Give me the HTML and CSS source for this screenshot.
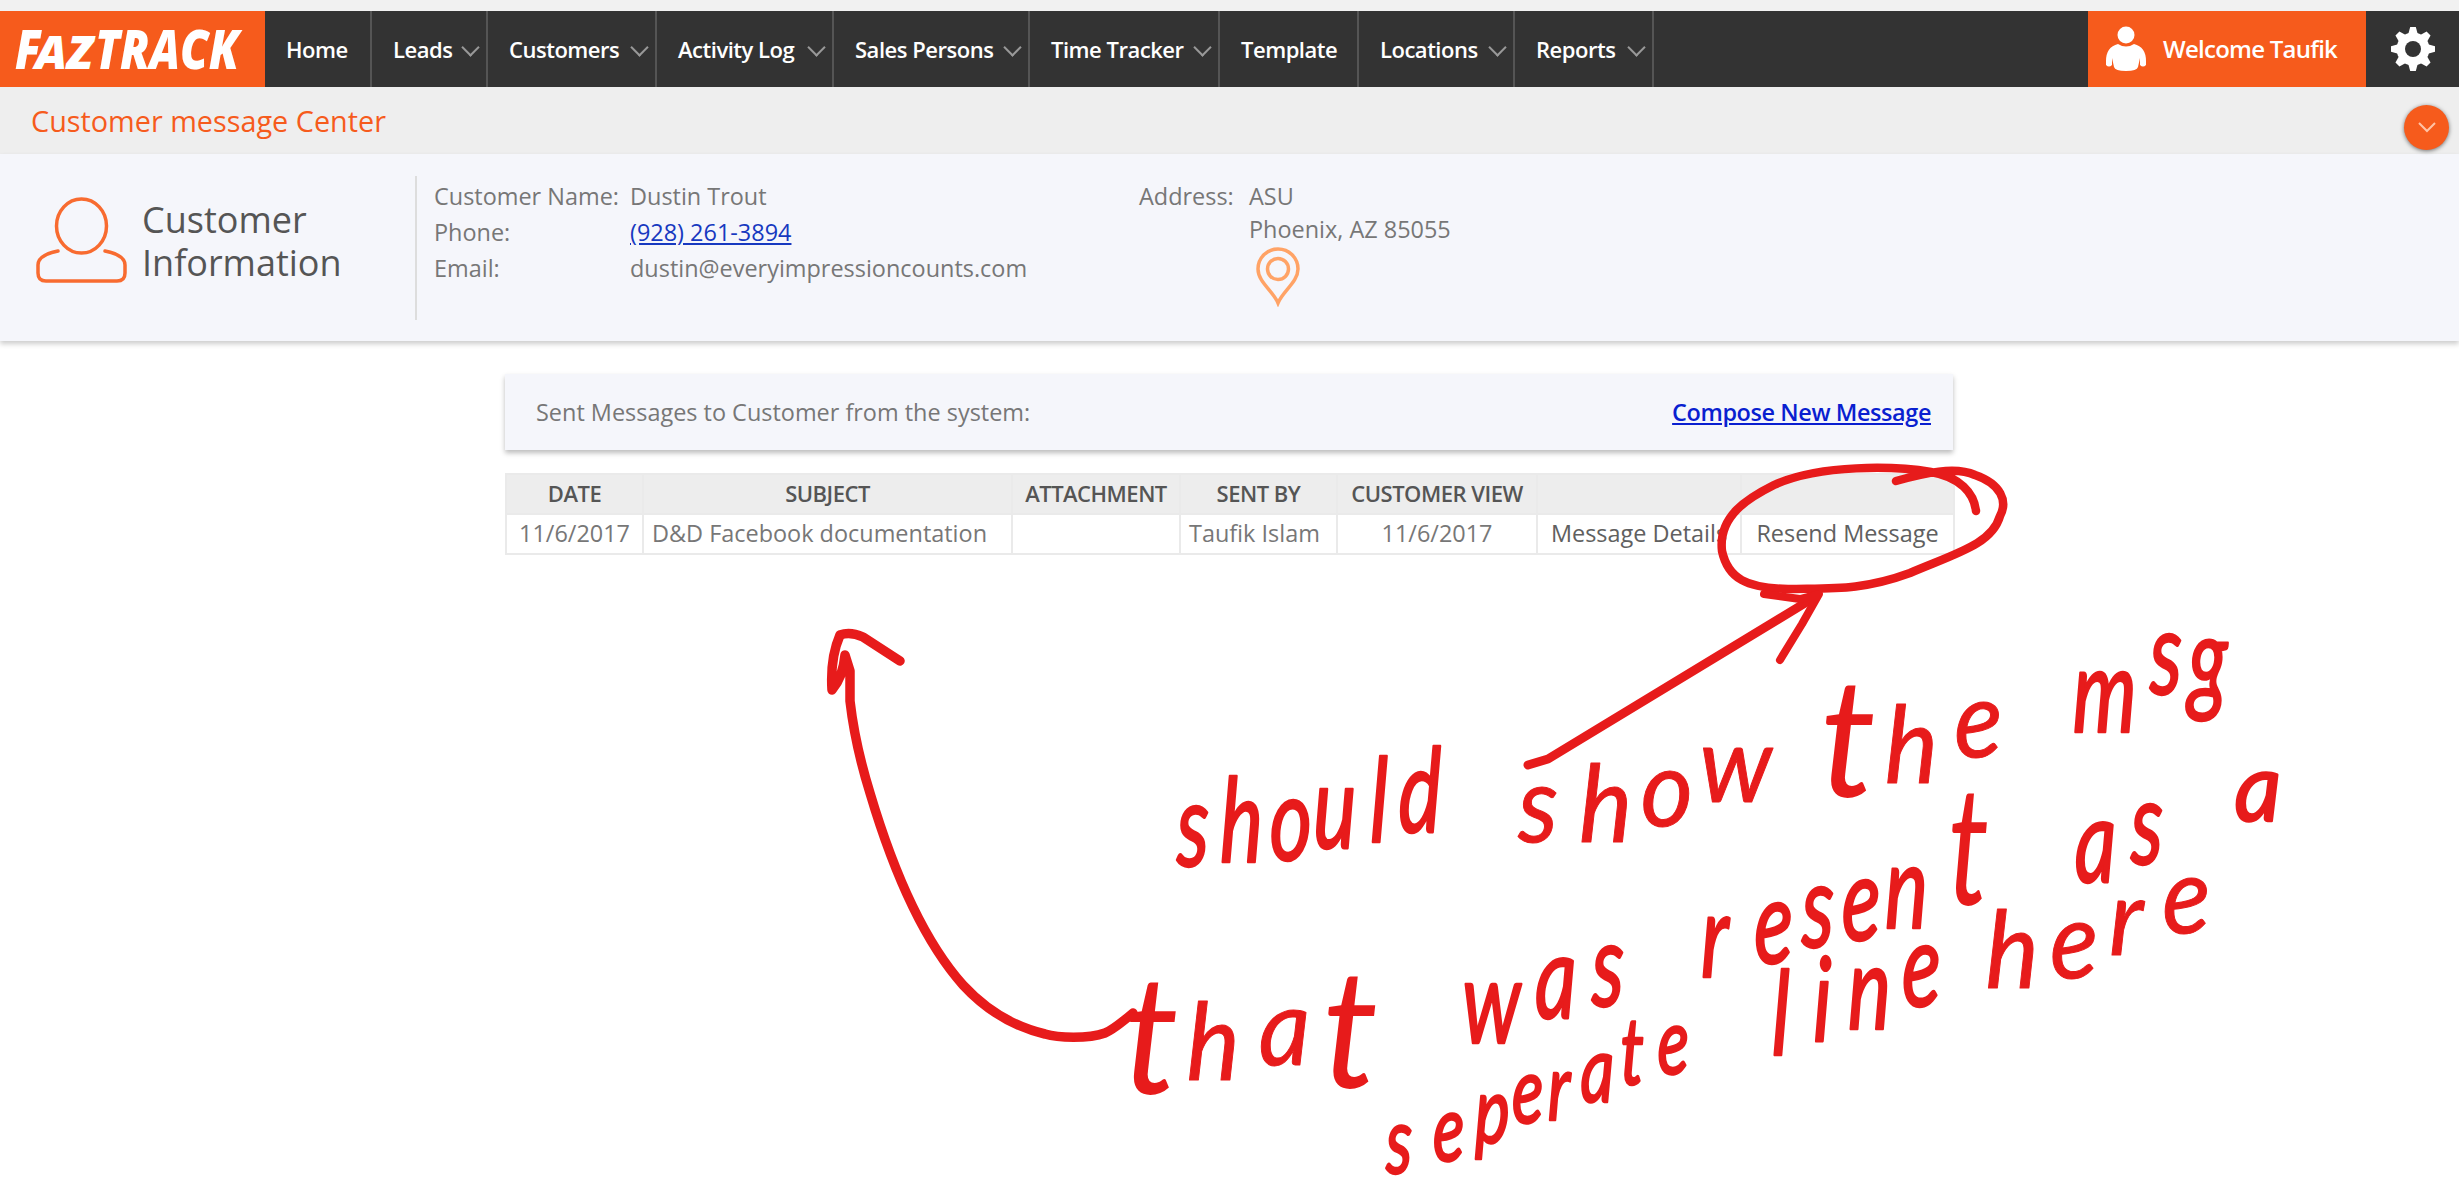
FILE: index.html
```html
<!DOCTYPE html>
<html lang="en">
<head>
<meta charset="utf-8">
<title>FazTrack - Customer message Center</title>
<link rel="stylesheet" href="styles.css">
</head>
<body>
<header class="navbar">
  <a class="logo">
    <svg width="265" height="76" viewBox="0 0 265 76"><text class="logo-text" transform="translate(15 58)"><tspan font-size="54" textLength="26" lengthAdjust="spacingAndGlyphs">F</tspan><tspan x="20" font-size="46" textLength="58" lengthAdjust="spacingAndGlyphs">AZ</tspan><tspan x="80" font-size="54" textLength="144" lengthAdjust="spacingAndGlyphs">TRACK</tspan></text></svg>
  </a>
  <nav class="menu">
    <a class="item w-home">Home</a>
    <a class="item w-leads">Leads<i class="caret"></i></a>
    <a class="item w-customers">Customers<i class="caret"></i></a>
    <a class="item w-activity">Activity Log<i class="caret"></i></a>
    <a class="item w-sales">Sales Persons<i class="caret"></i></a>
    <a class="item w-time">Time Tracker<i class="caret"></i></a>
    <a class="item w-template">Template</a>
    <a class="item w-locations">Locations<i class="caret"></i></a>
    <a class="item w-reports">Reports<i class="caret"></i></a>
  </nav>
  <div class="welcome">
    <svg width="40" height="46" viewBox="0 0 40 46" fill="#fff"><ellipse cx="20" cy="9" rx="8.5" ry="8.5"/><path d="M12 18Q20 23 28 18Q40 21 40 35V39Q37 42 34 39V32L32 41Q31 45 20 45Q9 45 8 41L6 32V39Q3 42 0 39V35Q0 21 12 18Z"/></svg>
    <span>Welcome Taufik</span>
  </div>
  <a class="settings">
    <svg width="44" height="44" viewBox="-22 -22 44 44"><g fill="#fff"><circle r="16.5"/><path id="tooth" d="M-5-14L-2.8-22H2.8L5-14V14L2.8 22H-2.8L-5 14Z"/><use href="#tooth" transform="rotate(45)"/><use href="#tooth" transform="rotate(90)"/><use href="#tooth" transform="rotate(135)"/></g><circle r="8" fill="#333"/></svg>
  </a>
</header>

<div class="titlebar">
  <h1>Customer message Center</h1>
  <button class="toggle"><svg width="18" height="11" viewBox="0 0 18 11"><path d="M1 1L9 9L17 1" fill="none" stroke="#ffc3a6" stroke-width="2"/></svg></button>
</div>

<section class="info">
  <div class="info-head">
    <svg width="93" height="88" viewBox="0 0 93 88" fill="none" stroke="#f86b30" stroke-width="3.5" stroke-linecap="round"><ellipse cx="46.500" cy="29" rx="25" ry="27"/><path d="M23 54Q3 58 3 68V76Q3 84 11 84H82Q90 84 90 76V68Q90 58 70 54"/></svg>
    <h2>Customer<br>Information</h2>
  </div>
  <dl class="contact">
    <dt>Customer Name:</dt><dd>Dustin Trout</dd>
    <dt>Phone:</dt><dd><a class="phone">(928) 261-3894</a></dd>
    <dt>Email:</dt><dd>dustin@everyimpressioncounts.com</dd>
  </dl>
  <div class="address">
    <span class="address-label">Address:</span>
    <div>ASU<br>Phoenix, AZ 85055
      <svg class="pin" width="46" height="60" viewBox="0 0 46 60" fill="none" stroke="#ffa366" stroke-width="3.500"><path d="M23 56C18 44 3 35 3 22A20 20 0 0 1 43 22C43 35 28 44 23 56Z"/><circle cx="23" cy="22" r="10.500"/></svg>
    </div>
  </div>
</section>

<main class="messages">
  <div class="messages-head"><span>Sent Messages to Customer from the system:</span><a>Compose New Message</a></div>
  <table>
    <colgroup><col class="c-date"><col class="c-subject"><col class="c-attach"><col class="c-sent"><col class="c-view"><col class="c-details"><col class="c-resend"></colgroup>
    <tr><th>DATE</th><th>SUBJECT</th><th>ATTACHMENT</th><th>SENT BY</th><th>CUSTOMER VIEW</th><th></th><th></th></tr>
    <tr><td>11/6/2017</td><td class="left">D&amp;D Facebook documentation</td><td></td><td class="left">Taufik Islam</td><td>11/6/2017</td><td class="action">Message Details</td><td class="action">Resend Message</td></tr>
  </table>
</main>

<svg class="ink" width="2459" height="1192" viewBox="0 0 2459 1192">
  <g class="stroke">
    <!-- ring round Resend Message -->
    <path d="M1896 481C1925 473 1955 466 1975 475C2001 484 2008 501 2000 516C1992 544 1957 553 1910 573C1861 591 1830 588 1788 589C1747 588 1728 579 1722 551C1718 516 1748 498 1774 485C1820 464 1895 466 1931 472C1960 477 1974 493 1976 511" stroke-width="8.500"/>
    <!-- arrow to the ring -->
    <path d="M1528 765L1548 759L1815 597" stroke-width="9"/>
    <path d="M1764 594L1800 599L1819 594L1802 624L1780 660" stroke-width="8"/>
    <!-- arrow to the table -->
    <path d="M1133 1013Q1113 1030 1105 1033C1088 1039 1058 1038 1045 1034C1015 1027 988 1012 963 985C923 940 892 867 870 793C861 764 854 736 850 701L850 671L845 655Q843 677 832 690Q830 658 840 635Q850 631 863 637L900 661" stroke-width="9.500"/>
  </g>
  <g class="handwriting">
    <g transform="scale(.7 1)">
      <text x="1681 1743 1814 1876 1957 1998" y="866 862 860 848 842 832">should</text>
      <text x="2961 3071 3126" y="732 694 700">msg</text>
      <text x="2089 2193 2274" y="1043 1018 1006">was</text>
      <text x="2430 2506 2574 2631 2693 2783" y="977 963 947 940 928 905">resen<tspan class="tall">t</tspan></text>
      <text x="2964 3044" y="882 864">as</text>
      <text class="small" x="1980 2047 2107 2160 2211 2258 2315 2368" y="1173 1161 1143 1123 1120 1102 1084 1074">seperate</text>
      <text x="2531 2590 2640 2717" y="1055 1042 1029 1006">line</text>
    </g>
    <g transform="scale(.95 1)">
      <text class="wide" x="1598 1662 1727 1789" y="842 842 826 802">show</text>
      <text class="wide" x="1916 1984 2057" y="797 783 757"><tspan class="tall">t</tspan>he</text>
      <text class="wide" x="1182 1249 1325 1392" y="1094 1080 1065 1088"><tspan class="tall">t</tspan>ha<tspan class="tall">t</tspan></text>
      <text class="wide" x="2090 2158 2220 2276" y="988 978 955 933">here</text>
      <text class="flat" x="2352" y="821">a</text>
    </g>
  </g>
</svg>
</body>
</html>
```
FILE: styles.css
```css
* { box-sizing: border-box; }
body { margin: 0; padding-top: 11px; min-height: 1192px; position: relative; overflow: hidden; background: linear-gradient(#f1f1f1 11px, #fff 11px); font: 23.45px/36px "Open Sans", "Noto Sans", sans-serif; color: #777; }
.navbar { display: flex; height: 76px; background: #333; color: #fff; }
.logo { width: 265px; background: #f65b1c; }
.logo svg { display: block; }
.logo-text { font-family: "Open Sans", sans-serif; font-weight: 800; font-style: italic; fill: #fff; }
.menu { display: flex; flex: 1; font-weight: 600; font-size: 22px; letter-spacing: -.48px; }
.item { display: flex; align-items: center; justify-content: space-between; padding: 0 8px 1px 21px; border-right: 2px solid #555; white-space: nowrap; }
.caret { width: 13px; height: 13px; margin: 0 1px 2px 0; border: solid #999; border-width: 0 2px 2px 0; transform: rotate(45deg); }
.w-home { width: 107px; }
.w-leads { width: 116px; }
.w-customers { width: 169px; }
.w-activity { width: 177px; }
.w-sales { width: 196px; }
.w-time { width: 190px; }
.w-template { width: 139px; }
.w-locations { width: 156px; }
.w-reports { width: 139px; }
.welcome { display: flex; align-items: center; gap: 17px; width: 278px; padding-left: 18px; background: #f65b1c; font-weight: 600; font-size: 24px; letter-spacing: -.75px; white-space: nowrap; }
.settings { display: flex; align-items: center; justify-content: center; width: 93px; }
.titlebar { display: flex; align-items: center; justify-content: space-between; height: 67px; padding: 0 10px 0 31px; background: #eee; }
h1 { margin: 0; font-size: 28.8px; font-weight: 400; color: #f65b1c; }
.toggle { display: flex; align-items: center; justify-content: center; width: 45px; height: 45px; margin-top: 14px; padding: 0; border: 0; border-radius: 50%; background: #f65b1c; box-shadow: 0 1px 4px #0008; }
.info { display: flex; height: 187px; padding-top: 22px; background: #f5f6fb; box-shadow: 0 3px 5px #0003; }
.info-head { display: flex; gap: 14px; width: 417px; height: 144px; padding: 21px 0 0 35px; border-right: 2px solid #ddd; }
h2 { margin: 1px 0 0; font-size: 36px; line-height: 43px; font-weight: 400; color: #555; }
.contact { display: grid; grid-template-columns: 196px 1fr; grid-auto-rows: 36px; width: 722px; margin: 2px 0 0; padding-left: 17px; }
dd { margin: 0; }
.phone { color: #1739c0; text-decoration: underline; }
.address { display: flex; margin-top: 4px; line-height: 33px; }
.address-label { width: 110px; }
.pin { display: block; margin: 1px 0 0 6px; }
.messages { width: 1448px; margin: 33px 0 0 505px; }
.messages-head { display: flex; align-items: center; justify-content: space-between; height: 76px; padding: 0 22px 0 31px; background: #f5f6fb; box-shadow: 0 3px 5px #0004; }
.messages-head a { color: #0a1fd0; font-weight: 600; letter-spacing: -.4px; text-decoration: underline; }
table { width: 1448px; margin-top: 23px; border-collapse: collapse; table-layout: fixed; line-height: 36px; white-space: nowrap; }
th, td { height: 40px; padding: 0 0 2px; border: 2px solid #eaeaea; text-align: center; }
th { background: #ededed; color: #555; font-weight: 600; font-size: 22px; letter-spacing: -.5px; }
td.left { padding-left: 8px; text-align: left; }
td.action { color: #606060; }
.c-date { width: 137px; }
.c-subject { width: 369px; }
.c-attach { width: 168px; }
.c-sent { width: 157px; }
.c-view { width: 200px; }
.c-details { width: 204px; }
.c-resend { width: 213px; }
.ink { position: absolute; left: 0; top: 0; pointer-events: none; }
.stroke { fill: none; stroke: #e71b1b; stroke-linecap: round; stroke-linejoin: round; }
.handwriting { font-family: Lato, sans-serif; font-style: italic; font-size: 116px; fill: #e71b1b; stroke: #e71b1b; stroke-width: 2.5; stroke-linejoin: round; }
.wide { font-size: 106px; stroke-width: 1; }
.small { font-size: 94px; }
.flat { font-size: 96px; }
.tall { font-size: 165px; stroke-width: 0; }
```
